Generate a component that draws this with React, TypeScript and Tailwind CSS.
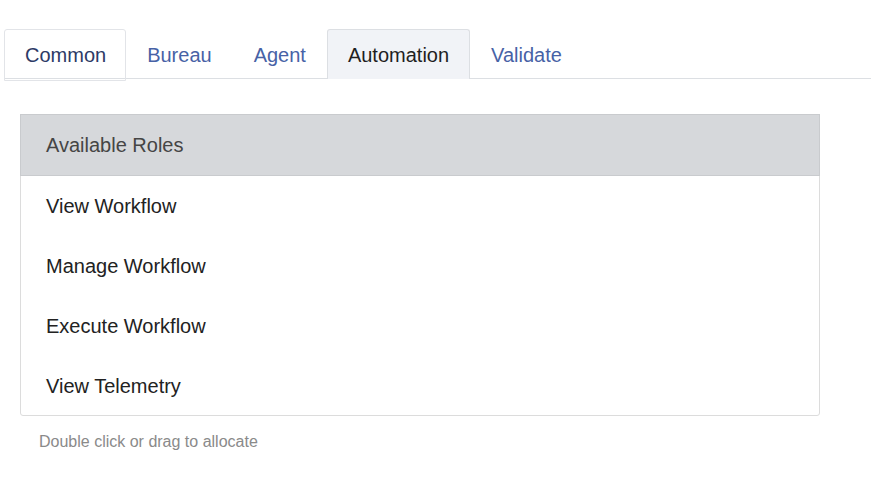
import React from "react";

const tabs = ["Common", "Bureau", "Agent", "Automation", "Validate"];
const roles = ["View Workflow", "Manage Workflow", "Execute Workflow", "View Telemetry"];

export default function App() {
  const active = "Automation";

  return (
    <div
      className="min-h-screen bg-white pt-[29px]"
      style={{ fontFamily: '"Liberation Sans", Arial, sans-serif' }}
    >
      {/* Tabs */}
      <ul className="ml-[4px] flex border-b border-[#dcdfe3]">
        {tabs.map((t) => {
          if (t === active) {
            return (
              <li
                key={t}
                className="-mb-px h-[50px] rounded-t-[3px] border border-b-0 border-[#dcdfe3] bg-[#f1f3f7] px-[20px] pt-[13px] text-[20px] leading-[24px] text-[#1f1f1f]"
              >
                {t}
              </li>
            );
          }
          if (t === "Common") {
            return (
              <li
                key={t}
                className="-mb-[3px] h-[52px] rounded-t-[3px] border border-[#e2e4e8] pl-[20px] pr-[19px] pt-[13px] text-[20px] leading-[24px] text-[#2d3a66]"
              >
                {t}
              </li>
            );
          }
          return (
            <li
              key={t}
              className="h-[49px] border border-transparent px-[20px] pt-[13px] text-[20px] leading-[24px] text-[#4762a6]"
            >
              {t}
            </li>
          );
        })}
      </ul>

      {/* Roles panel */}
      <div className="px-[20px] pt-[35px]">
        <div className="w-[800px] rounded-[3px] border border-[#dcdcdc]">
          <div className="-m-px border border-[#c9cbce] bg-[#d6d8db] px-[25px] py-[18px] text-[20px] leading-[24px] text-[#454545]">
            Available Roles
          </div>
          {roles.map((r) => (
            <div
              key={r}
              className="px-[25px] pb-[17px] pt-[19px] text-[20px] leading-[24px] text-[#222222]"
            >
              {r}
            </div>
          ))}
        </div>
        <p className="mt-[16px] pl-[19px] text-[16px] leading-[20px] text-[#8a8a8a]">
          Double click or drag to allocate
        </p>
      </div>
    </div>
  );
}
